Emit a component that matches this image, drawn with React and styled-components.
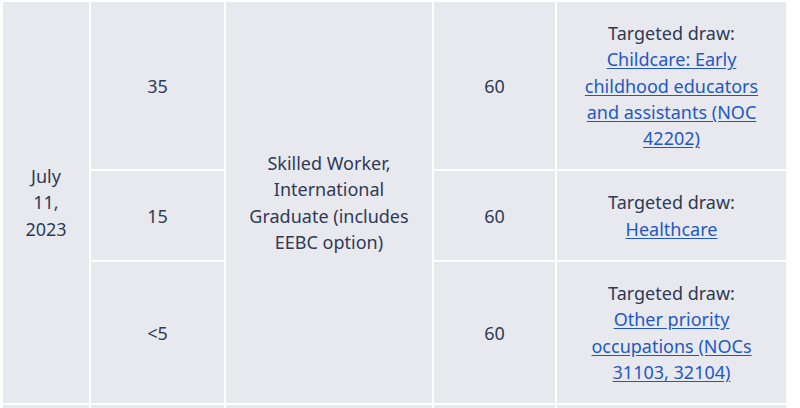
import React from "react";
import styled, { createGlobalStyle } from "styled-components";

const GlobalStyle = createGlobalStyle`
  html, body {
    margin: 0;
    padding: 0;
    background: #ffffff;
    overflow: hidden;
  }
  body {
    font-family: "Noto Sans", "Open Sans", sans-serif;
  }
`;

const columns = [86, 133, 206, 121, 229];

const draws = [
  { invited: "35", score: "60", link: "Childcare: Early childhood educators and assistants (NOC 42202)" },
  { invited: "15", score: "60", link: "Healthcare" },
  { invited: "<5", score: "60", link: "Other priority occupations (NOCs 31103, 32104)" },
];

const Wrapper = styled.div`
  padding: 0 0 0 1px;
`;

const Table = styled.table`
  table-layout: fixed;
  width: 787px;
  border-collapse: separate;
  border-spacing: 2px;
  background: #ffffff;
  margin: 0;
`;

const Col = styled.col`
  width: ${(p) => p.$w}px;
`;

const Cell = styled.td`
  background: #e8e9ef;
  color: #2f3a54;
  font-size: 18px;
  line-height: 26.3px;
  text-align: center;
  vertical-align: middle;
  padding: 18px 16px;
  box-sizing: border-box;
`;

const EmptyCell = styled(Cell)`
  height: 40px;
  padding: 0;
`;

const Label = styled.span`
  display: block;
`;

const DrawLink = styled.a`
  color: #1f58c6;
  text-decoration: underline;
  text-underline-offset: 2px;
`;

const App = () => {
  return (
    <Wrapper>
      <GlobalStyle />
      <Table>
        <colgroup>
          {columns.map((w, i) => (
            <Col key={i} $w={w} />
          ))}
        </colgroup>
        <tbody>
          {draws.map((draw, i) => (
            <tr key={i}>
              {i === 0 && <Cell rowSpan={draws.length}>July 11, 2023</Cell>}
              <Cell>{draw.invited}</Cell>
              {i === 0 && (
                <Cell rowSpan={draws.length}>
                  Skilled Worker, International Graduate (includes EEBC option)
                </Cell>
              )}
              <Cell>{draw.score}</Cell>
              <Cell>
                <Label>Targeted draw:</Label>
                <DrawLink href="#">{draw.link}</DrawLink>
              </Cell>
            </tr>
          ))}
          <tr>
            {columns.map((w, i) => (
              <EmptyCell key={i} />
            ))}
          </tr>
        </tbody>
      </Table>
    </Wrapper>
  );
};

export default App;
